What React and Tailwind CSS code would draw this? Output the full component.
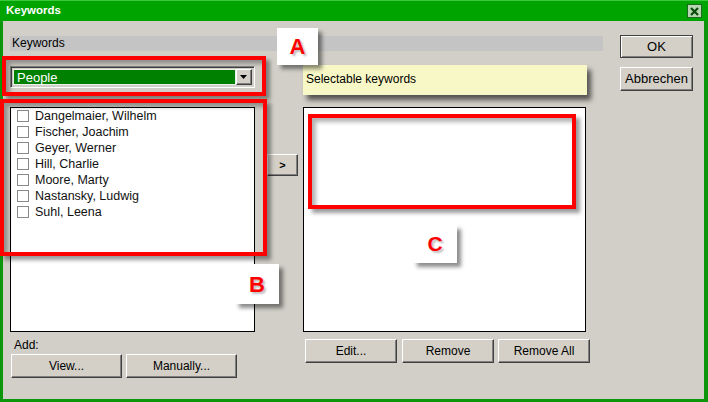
import React from "react";

const people = [
  "Dangelmaier, Wilhelm",
  "Fischer, Joachim",
  "Geyer, Werner",
  "Hill, Charlie",
  "Moore, Marty",
  "Nastansky, Ludwig",
  "Suhl, Leena",
];

const raised =
  "bg-[#d4d0c8] border border-t-white border-l-white border-r-[#404040] border-b-[#404040] shadow-[inset_-1px_-1px_0_#808080] flex items-center justify-center text-black shrink-0";

const Btn = ({ children, className = "" }) => (
  <button className={`${raised} h-[24px] ${className}`}>{children}</button>
);

const Label = ({ children, className }) => (
  <div
    className={`absolute bg-white shadow-[4px_4px_4px_rgba(0,0,0,0.45)] flex items-center justify-center font-bold text-[#ff0000] [text-shadow:2px_2px_2px_rgba(0,0,0,0.25)] ${className}`}
  >
    {children}
  </div>
);

const Frame = ({ className }) => (
  <div
    className={`absolute border-[4px] border-[#ff0000] shadow-[4px_4px_4px_rgba(0,0,0,0.4),inset_4px_4px_4px_rgba(0,0,0,0.3)] ${className}`}
  />
);

export default function App() {
  return (
    <div className="relative w-[708px] h-[402px] flex flex-col font-['Liberation_Sans',Arial,sans-serif] text-[12px] text-black overflow-hidden">
      {/* title bar */}
      <div className="h-[21px] bg-[#00a400] border-t border-t-[#3cc83c] flex items-center justify-between pl-[6px] pr-[6px]">
        <span className="text-white font-bold text-[11.5px]">Keywords</span>
        <div className="w-[15px] h-[14px] bg-[#b6d6b2] border border-[#1d6a1d] flex items-center justify-center">
          <svg width="9" height="9" viewBox="0 0 9 9">
            <path d="M1 1 L8 8 M8 1 L1 8" stroke="#0b4a0b" strokeWidth="2.2" />
          </svg>
        </div>
      </div>

      {/* body */}
      <div className="flex-1 bg-[#d1cfc7] border-l-[3px] border-r-[4px] border-b-[3px] border-[#0c960c] flex pl-[7px] pt-[15px]">
        <div className="w-[593px] flex flex-col">
          <div className="h-[15px] bg-[#c4c4c4] pl-[2px] leading-[15px]">Keywords</div>

          <div className="flex">
            {/* left column */}
            <div className="w-[245px] flex flex-col">
              <div className="mt-[15px] h-[22px] border border-t-[#808080] border-l-[#808080] border-r-white border-b-white shadow-[inset_1px_1px_0_#404040] flex p-[2px]">
                <div className="flex-1 bg-[#008000] text-white text-[13px] leading-[16px] pl-[3px] border border-[#e8f0e8]">
                  People
                </div>
                <div className={`${raised} w-[16px]`}>
                  <svg width="8" height="5" viewBox="0 0 8 5">
                    <path d="M0 0 H7 L3.5 4 Z" fill="#000" />
                  </svg>
                </div>
              </div>

              <div className="mt-[19px] h-[225px] bg-white border border-black pl-[6px]">
                {people.map((p) => (
                  <div key={p} className="h-[16px] flex items-center gap-[6px]">
                    <div className="w-[12px] h-[12px] border border-[#8a8a8a] bg-white" />
                    <span className="text-[12.5px] leading-[16px] text-[#111]">{p}</span>
                  </div>
                ))}
              </div>

              <div className="mt-[6px] leading-[14px] pl-[4px]">Add:</div>
              <div className="mt-[2px] ml-[1px] flex gap-[4px]">
                <Btn className="w-[111px]">View...</Btn>
                <Btn className="w-[111px]">Manually...</Btn>
              </div>
            </div>

            {/* middle */}
            <div className="w-[48px] pl-[12px] pt-[103px]">
              <button className={`${raised} w-[31px] h-[22px] font-bold text-[11px]`}>&gt;</button>
            </div>

            {/* right column */}
            <div className="w-[290px] flex flex-col">
              <div className="mt-[14px] w-[284px] h-[30px] bg-[#f8f8c6] shadow-[4px_5px_5px_rgba(0,0,0,0.6)] pl-[3px] leading-[28px]">
                Selectable keywords
              </div>
              <div className="mt-[12px] w-[283px] h-[225px] bg-white border border-black" />
              <div className="mt-[7px] ml-[2px] flex">
                <Btn className="w-[92px]">Edit...</Btn>
                <Btn className="w-[92px] ml-[5px]">Remove</Btn>
                <Btn className="w-[92px] ml-[4px]">Remove All</Btn>
              </div>
            </div>
          </div>
        </div>

        {/* OK / Abbrechen */}
        <div className="ml-[17px] flex flex-col">
          <button className="w-[73px] h-[23px] -mt-[1px] bg-[#d4d0c8] border border-[#404040] shadow-[inset_1px_1px_0_#fff,inset_-1px_-1px_0_#808080] text-[13px]">
            OK
          </button>
          <Btn className="w-[73px] h-[22px] mt-[9px] text-[13px]">Abbrechen</Btn>
        </div>
      </div>

      {/* annotations */}
      <Frame className="left-[2px] top-[56px] w-[264px] h-[40px]" />
      <Frame className="left-[0px] top-[99px] w-[267px] h-[157px]" />
      <Frame className="left-[308px] top-[114px] w-[268px] h-[95px]" />
      <Label className="left-[277px] top-[28px] w-[41px] h-[37px] text-[22px]">A</Label>
      <Label className="left-[235px] top-[264px] w-[44px] h-[40px] text-[22px]">B</Label>
      <Label className="left-[413px] top-[225px] w-[44px] h-[38px] text-[21px]">C</Label>
    </div>
  );
}
